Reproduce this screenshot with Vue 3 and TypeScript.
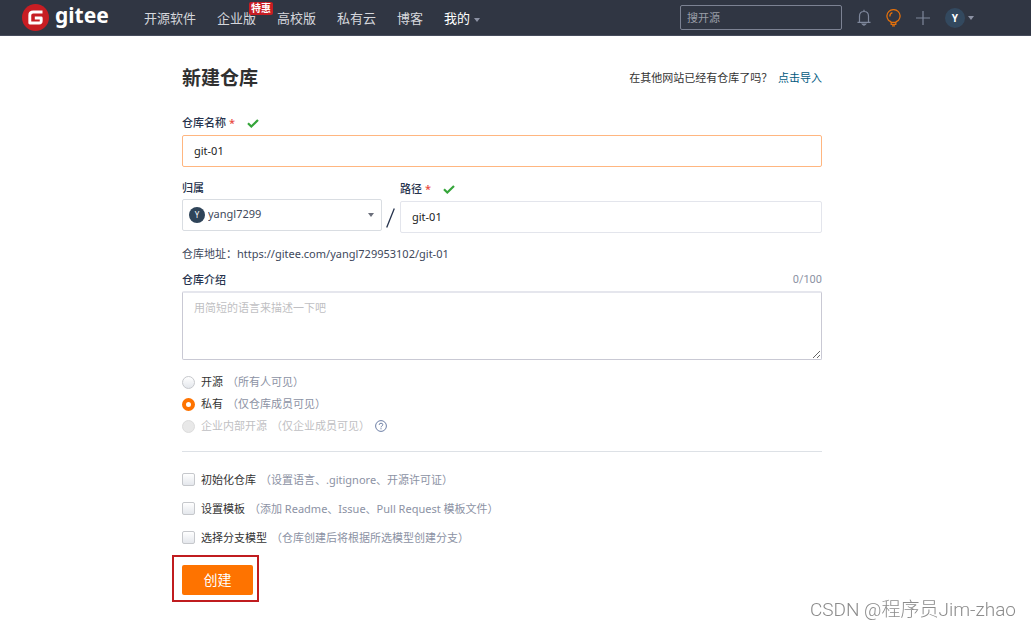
<script setup lang="ts">
import { ref } from 'vue'

interface NavItem {
  label: string
  badge?: string
  active?: boolean
}

interface Option {
  id: string
  label: string
  hint: string
  disabled?: boolean
}

const nav: NavItem[] = [
  { label: '开源软件' },
  { label: '企业版', badge: '特惠' },
  { label: '高校版' },
  { label: '私有云' },
  { label: '博客' },
  { label: '我的', active: true },
]

const visibilities: Option[] = [
  { id: 'public', label: '开源', hint: '（所有人可见）' },
  { id: 'private', label: '私有', hint: '（仅仓库成员可见）' },
  { id: 'internal', label: '企业内部开源', hint: '（仅企业成员可见）', disabled: true },
]

const extras: Option[] = [
  { id: 'init', label: '初始化仓库', hint: '（设置语言、.gitignore、开源许可证）' },
  { id: 'template', label: '设置模板', hint: '（添加 Readme、Issue、Pull Request 模板文件）' },
  { id: 'branch', label: '选择分支模型', hint: '（仓库创建后将根据所选模型创建分支）' },
]

const name = ref('git-01')
const path = ref('git-01')
const owner = ref('yangl7299')
const intro = ref('')
const visibility = ref('private')
const selected = ref<string[]>([])
</script>

<template>
  <div class="page">
    <header class="topbar">
      <a class="logo" href="#" aria-label="gitee">
        <svg width="27" height="27" viewBox="0 0 27 27" aria-hidden="true">
          <circle cx="13.5" cy="13.5" r="13.5" fill="#c71d23" />
          <path
            d="M20.5 8H11.2Q7.8 8 7.8 11.2V19H17.2Q19.2 19 19.2 17V14H12.8"
            fill="none"
            stroke="#fff"
            stroke-width="2.9"
            stroke-linejoin="round"
          />
        </svg>
        <span class="logo-text">gitee</span>
      </a>
      <nav class="nav">
        <a v-for="item in nav" :key="item.label" href="#" :class="{ active: item.active }">
          {{ item.label }}<i v-if="item.active" class="caret"></i>
          <span v-if="item.badge" class="badge">{{ item.badge }}</span>
        </a>
      </nav>
      <input class="search" type="search" placeholder="搜开源" aria-label="搜开源" />
      <div class="tools">
        <button type="button" aria-label="通知">
          <svg width="14" height="18" viewBox="0 0 14 18" fill="none" stroke="#7e879b" stroke-width="1.2">
            <path d="M7 0.8V2.5M2.5 13V7.2Q2.5 2.5 7 2.5T11.5 7.2V13M0.5 13.4H13.5" />
            <path d="M5.2 15Q7 17.4 8.8 15Z" fill="#7e879b" />
          </svg>
        </button>
        <button type="button" aria-label="动态">
          <svg width="15" height="18" viewBox="0 0 15 18" fill="none" stroke="#e2700c" stroke-width="1.3">
            <path d="M5.2 13.4C5 12.4 3.6 12.2 2.5 11.2A6.6 6.4 0 1 1 12.5 11.2C11.4 12.2 10 12.4 9.8 13.4Z" />
            <path d="M3.8 7.4Q3.9 4.5 6.4 3.7" />
            <path d="M5.2 13.4V15.4H9.8V13.4M6 16.9H9" />
          </svg>
        </button>
        <button type="button" aria-label="新建">
          <svg width="14" height="14" viewBox="0 0 14 14" stroke="#7e879b" stroke-width="1.2">
            <path d="M7 0V14M0 7H14" />
          </svg>
        </button>
        <button type="button" aria-label="账户">
          <span class="avatar large">Y</span><i class="caret"></i>
        </button>
      </div>
    </header>

    <main class="content">
      <div class="heading">
        <h1>新建仓库</h1>
        <p>在其他网站已经有仓库了吗？ <a href="#">点击导入</a></p>
      </div>

      <form @submit.prevent>
        <div class="field">
          <label class="title checked" for="repo-name">
            仓库名称<em>*</em>
            <svg class="tick" width="12" height="9" viewBox="0 0 12 9"><path d="M1 4.3L4.3 7.5L11 1" /></svg>
          </label>
          <input id="repo-name" v-model="name" class="box focused" type="text" />
        </div>

        <div class="location">
          <div class="field owner">
            <label class="title" for="repo-owner">归属</label>
            <div class="select">
              <select id="repo-owner" v-model="owner" class="box">
                <option>yangl7299</option>
              </select>
              <span class="avatar">Y</span>
              <i class="caret"></i>
            </div>
          </div>
          <svg class="slash" width="9" height="20" viewBox="0 0 9 20"><path d="M8.3 0.5L0.7 19.5" /></svg>
          <div class="field path">
            <label class="title checked" for="repo-path">
              路径<em>*</em>
              <svg class="tick" width="12" height="9" viewBox="0 0 12 9"><path d="M1 4.3L4.3 7.5L11 1" /></svg>
            </label>
            <input id="repo-path" v-model="path" class="box" type="text" />
          </div>
        </div>

        <p class="address">仓库地址：https://gitee.com/yangl729953102/{{ path }}</p>

        <div class="field">
          <div class="intro-head">
            <label class="title" for="repo-intro">仓库介绍</label>
            <span class="counter">{{ intro.length }}/100</span>
          </div>
          <textarea id="repo-intro" v-model="intro" maxlength="100" placeholder="用简短的语言来描述一下吧"></textarea>
        </div>

        <div class="radios">
          <div v-for="item in visibilities" :key="item.id" class="option">
            <label :class="{ disabled: item.disabled }">
              <input v-model="visibility" type="radio" name="visibility" :value="item.id" :disabled="item.disabled" />
              {{ item.label }}<span>{{ item.hint }}</span>
            </label>
            <button v-if="item.disabled" class="help" type="button" aria-label="帮助">
              <svg width="12" height="12" viewBox="0 0 12 12" fill="none" stroke="#6d7fa6">
                <circle cx="6" cy="6" r="5.4" />
                <path d="M4.2 4.9Q4.2 3.2 6 3.2T7.8 4.7Q7.8 5.5 6.9 6T6 7.4M6 8.2V9.3" />
              </svg>
            </button>
          </div>
        </div>

        <hr />

        <div class="checks">
          <div v-for="item in extras" :key="item.id" class="option">
            <label>
              <input v-model="selected" type="checkbox" :value="item.id" />
              {{ item.label }}<span>{{ item.hint }}</span>
            </label>
          </div>
        </div>

        <div class="submit">
          <button type="submit">创建</button>
        </div>
      </form>
    </main>

    <div class="watermark">CSDN @程序员Jim-zhao</div>
  </div>
</template>

<style>
body {
  background: #fff;
}
</style>

<style scoped>
.page,
.page * {
  box-sizing: border-box;
}

.page {
  min-height: 100vh;
  color: #40485b;
  font-family: 'Noto Sans', 'Noto Sans CJK SC', sans-serif;
  font-size: 11px;
  line-height: 16px;
}

button,
input,
select,
textarea {
  font: inherit;
  color: inherit;
}

button {
  padding: 0;
  border: 0;
  background: none;
}

a {
  text-decoration: none;
}

.topbar {
  display: flex;
  align-items: center;
  height: 36px;
  padding: 0 57px 0 22px;
  border-bottom: 1px solid #464c5c;
  background: #303643;
}

.logo {
  display: flex;
  align-items: center;
  gap: 6px;
  width: 122px;
  color: #fff;
}

.logo-text {
  padding-bottom: 6px;
  font: bold 21px/24px 'Noto Sans', sans-serif;
}

.nav {
  display: flex;
  flex: 1;
  gap: 21px;
  font-size: 13px;
  line-height: 20px;
}

.nav a {
  position: relative;
  color: #d5d7dc;
}

.nav a.active {
  color: #fff;
}

.badge {
  position: absolute;
  top: -6px;
  right: -17px;
  padding: 0 2px;
  border-radius: 2px;
  background: #c71d23;
  color: #fff;
  font-size: 10px;
  font-weight: bold;
  line-height: 13px;
}

.caret {
  display: inline-block;
  border: 3px solid transparent;
  border-top: 4px solid #8c92a4;
  border-bottom: 0;
}

.nav .caret {
  margin-left: 4px;
  vertical-align: 1px;
}

.search {
  width: 162px;
  height: 25px;
  padding: 0 6px;
  border: 1px solid #7c8293;
  border-radius: 2px;
  background: transparent;
  color: #fff;
}

.search::placeholder {
  color: #9a9ea8;
  opacity: 1;
}

.tools {
  display: flex;
  align-items: center;
  gap: 15px;
  margin-left: 15px;
}

.tools button {
  display: flex;
  align-items: center;
  gap: 3px;
}

.avatar {
  display: grid;
  place-items: center;
  width: 16px;
  height: 16px;
  border-radius: 50%;
  background: #2f4459;
  color: #fff;
  font-size: 8px;
  line-height: 16px;
}

.avatar.large {
  width: 20px;
  height: 20px;
  background: #33495f;
  font-size: 10px;
  font-weight: bold;
}

.content {
  max-width: 667px;
  margin: 0 auto;
  padding: 30px 27px 0 0;
}

.heading {
  display: flex;
  align-items: center;
  justify-content: space-between;
  margin-bottom: 24px;
}

h1 {
  margin: 0;
  color: #303030;
  font-size: 19px;
  line-height: 24px;
}

.heading p {
  margin: 0;
  color: #333;
}

.heading a {
  margin-left: 3px;
  color: #005980;
}

.field {
  display: flex;
  flex-direction: column;
  gap: 3px;
}

.title {
  color: #26334d;
  font-weight: 500;
}

.title.checked {
  display: flex;
  align-items: center;
  height: 18px;
}

.title em {
  margin-left: 3px;
  color: #e84a3c;
  font-style: normal;
}

.tick {
  margin-left: 12px;
  fill: none;
  stroke: #35a53a;
  stroke-width: 2.2;
}

.box {
  width: 100%;
  height: 32px;
  padding: 0 11px 2px;
  border: 1px solid #e3e5ec;
  border-radius: 2px;
  outline: 0;
  background: #fff;
  color: #222;
}

.box.focused {
  border-color: #ffb680;
}

.location {
  display: flex;
  align-items: flex-start;
  margin-top: 13px;
}

.owner {
  width: 200px;
}

.select {
  display: grid;
  align-items: center;
  grid-template-columns: 7px 16px 1fr 6px 8px;
}

.select > * {
  grid-row: 1;
}

.select select {
  grid-column: 1 / -1;
  padding-left: 25px;
  border-color: #d9dde2;
  appearance: none;
  color: #40485b;
}

.select .avatar {
  grid-column: 2;
  z-index: 1;
  pointer-events: none;
}

.select .caret {
  grid-column: 4;
  z-index: 1;
  border-top-color: #6b6f7b;
  pointer-events: none;
}

.slash {
  margin: 28px 5px 0 4px;
  fill: none;
  stroke: #26334d;
  stroke-width: 1.3;
}

.path {
  flex: 1;
}

.address {
  margin: 13px 0 10px;
}

.intro-head {
  display: flex;
  justify-content: space-between;
}

.counter {
  color: #8c92a4;
  font-family: Roboto, sans-serif;
}

textarea {
  display: block;
  width: 100%;
  height: 69px;
  padding: 7px 11px;
  border: 1px solid #c9c9d4;
  border-top: 2px solid #e5e6ed;
  border-radius: 2px;
  outline: 0;
  resize: vertical;
}

textarea::placeholder {
  color: #bfbfc3;
  opacity: 1;
}

.radios {
  margin-top: 11px;
}

.option {
  display: flex;
  align-items: center;
  height: 22px;
}

.checks .option {
  height: 29px;
}

.option label {
  display: flex;
  align-items: center;
  color: #333;
}

.option label span {
  margin-left: 4px;
  color: #8c92a4;
}

.option input {
  width: 13px;
  height: 13px;
  margin: 0 6px 0 0;
  border: 1px solid #c6c8cc;
  border-radius: 2px;
  appearance: none;
  background: linear-gradient(#fff, #e4e7ec);
}

.option input[type='radio'] {
  border-radius: 50%;
}

.option input[type='radio']:checked {
  border: 4px solid #fe7300;
  background: #fff;
}

.option input[type='checkbox']:checked {
  background: #fe7300;
}

.option .disabled,
.option .disabled span {
  color: #bfbfc3;
}

.option .disabled input {
  border-color: #dcdcdc;
  background: #e8e8e8;
}

.help {
  display: flex;
  margin-left: 5px;
}

hr {
  height: 1px;
  margin: 14px 0 13px;
  border: 0;
  background: #dde1e6;
}

.submit {
  position: relative;
  width: 71px;
  margin-top: 13px;
}

.submit::after {
  content: '';
  position: absolute;
  inset: -10px -6px -7px -10px;
  border: 2px solid #c01c1f;
  pointer-events: none;
}

.submit button {
  display: block;
  width: 100%;
  height: 30px;
  border-radius: 2px;
  background: #fe7300;
  color: #fff;
  font-size: 14px;
}

.watermark {
  position: fixed;
  right: 15px;
  bottom: 7px;
  color: #8c8c8c;
  font-family: Roboto, 'Noto Sans CJK SC', sans-serif;
  font-size: 19px;
  font-weight: 300;
  line-height: 24px;
  text-shadow: 1px 1px 0 #fff;
}
</style>
